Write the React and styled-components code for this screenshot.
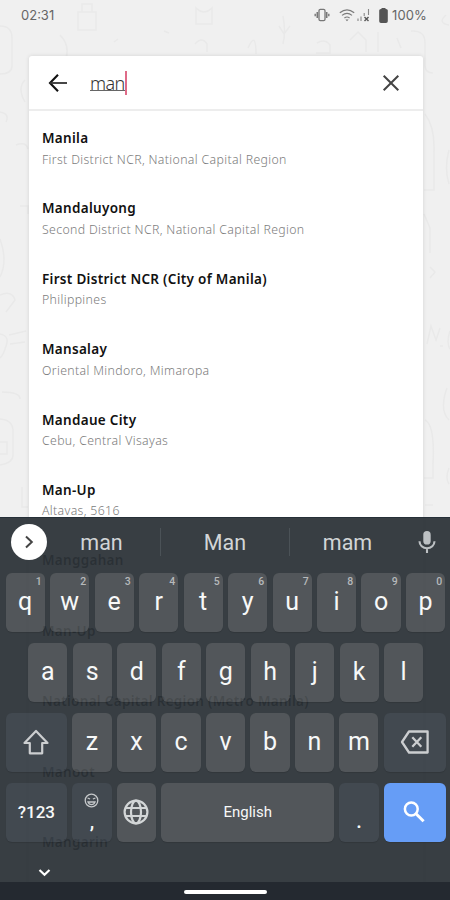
import React from 'react';
import styled, { createGlobalStyle } from 'styled-components';

const Global = createGlobalStyle`
  * { box-sizing: border-box; }
  body { margin: 0; background: #f0f0f0; }
  svg { display: block; flex: none; }
`;

const Screen = styled.div`
  position: relative;
  width: 450px;
  height: 900px;
  overflow: hidden;
  background: #f0f0f0;
  font-family: 'Noto Sans', sans-serif;
`;

const Doodles = styled.svg`
  position: absolute;
  inset: 0;
  fill: none;
  stroke: #e9e9e9;
  stroke-width: 1.5;
`;

const StatusBar = styled.header`
  position: relative;
  display: flex;
  align-items: center;
  height: 30px;
  padding: 0 20px 0 21px;
  color: #666;
  font: 400 13px/30px Inter, sans-serif;
`;

const Time = styled.span`
  flex: 1;
  letter-spacing: 0;
`;

const StatusIcons = styled.div`
  display: flex;
  align-items: center;
  margin-right: 4px;
`;

const Percent = styled.span`
  width: 38px;
  letter-spacing: 0.1px;
`;

const Spacer = styled.span`
  width: ${(p) => p.$width}px;
`;

const Card = styled.main`
  position: relative;
  width: 394px;
  height: 870px;
  margin: 26px 0 0 29px;
  background: #fff;
  border-radius: 3px 3px 0 0;
  box-shadow: 0 0 4px rgba(0, 0, 0, 0.12);
`;

const SearchBar = styled.div`
  display: flex;
  align-items: center;
  height: 55px;
  padding: 0 22px 0 19px;
  border-bottom: 2px solid #ededed;
`;

const Query = styled.div`
  display: flex;
  align-items: center;
  flex: 1;
  margin-left: 22px;
  color: #333;
  font: 300 18px/24px 'Noto Sans', sans-serif;
`;

const Typed = styled.span`
  height: 17px;
  line-height: 18px;
  letter-spacing: -0.6px;
  border-bottom: 1px solid #666;
`;

const Caret = styled.span`
  width: 2.5px;
  height: 24px;
  background: #df6b88;
`;

const Places = styled.ul`
  margin: 0;
  padding: 17px 0 0 13px;
  list-style: none;
`;

const Place = styled.li`
  height: 70.4px;
`;

const PlaceName = styled.div`
  color: #111;
  font-size: 13.5px;
  font-weight: 600;
  line-height: 20.5px;
  letter-spacing: 0.3px;
  white-space: nowrap;
`;

const PlaceArea = styled.div`
  color: #7c7c7c;
  font-size: 12.3px;
  font-weight: 300;
  line-height: 21px;
  letter-spacing: 0.35px;
  white-space: nowrap;
`;

const Keyboard = styled.section`
  position: absolute;
  left: 0;
  right: 0;
  bottom: 0;
  height: 383px;
  display: flex;
  flex-direction: column;
  background: rgba(44, 51, 56, 0.945);
  border-top: 1px solid #263038;
  font-family: Roboto, sans-serif;
`;

const Suggestions = styled.div`
  display: flex;
  align-items: center;
  height: 50px;
  padding-left: 11px;
  margin: -1px 0 7px;
`;

const Expand = styled.button`
  display: grid;
  place-items: center;
  width: 36px;
  height: 36px;
  padding: 0;
  border: 0;
  border-radius: 50%;
  background: #fff;
  margin-right: -4px;
`;

const Suggestion = styled.span`
  width: ${(p) => p.$width}px;
  color: #d2d5d7;
  font-size: 21.5px;
  line-height: 26px;
  text-align: center;
  padding-top: 3px;
`;

const Divider = styled.span`
  width: 1px;
  height: 28px;
  background: #4b5257;
`;

const Rows = styled.div`
  display: flex;
  flex-direction: column;
  gap: 11.7px;
  padding-left: 5.6px;
`;

const Row = styled.div`
  display: flex;
  gap: 5.3px;
  height: 58.3px;
  padding-left: ${(p) => p.$indent || 0}px;
`;

const keyColors = {
  letter: 'rgba(255,250,240,0.135)',
  action: 'rgba(120,130,150,0.17)',
  primary: '#669df6',
};

const Key = styled.button`
  position: relative;
  display: flex;
  flex-direction: column;
  align-items: center;
  justify-content: center;
  flex: none;
  width: ${(p) => p.$width || 39.2}px;
  height: 58.3px;
  padding: 0;
  border: 0;
  border-radius: 6px;
  background: ${(p) => keyColors[p.$kind || 'letter']};
  box-shadow: 0 1px 1px rgba(0, 0, 0, 0.12);
  color: #f7f8f8;
  font: ${(p) => p.$weight || 400} ${(p) => p.$size || 25}px/30px Roboto, sans-serif;
`;

const Hint = styled.span`
  position: absolute;
  top: 3px;
  right: 3px;
  color: #b6b9bb;
  font-size: 10.5px;
  font-weight: 500;
  line-height: 12px;
`;

const Mark = styled.span`
  height: 22px;
  font-size: 20px;
  font-weight: 500;
  line-height: 22px;
  margin-top: ${(p) => p.$top || 0}px;
`;

const Footer = styled.div`
  display: flex;
  align-items: center;
  height: 41px;
  margin-top: auto;
  padding: 21px 0 0 38px;
`;

const NavBar = styled.div`
  display: flex;
  align-items: center;
  justify-content: center;
  height: 18px;
  background: #242930;
`;

const Pill = styled.span`
  width: 83px;
  height: 4px;
  margin-top: 2px;
  border-radius: 2px;
  background: #fff;
`;

const places = [
  ['Manila', 'First District NCR, National Capital Region'],
  ['Mandaluyong', 'Second District NCR, National Capital Region'],
  ['First District NCR (City of Manila)', 'Philippines'],
  ['Mansalay', 'Oriental Mindoro, Mimaropa'],
  ['Mandaue City', 'Cebu, Central Visayas'],
  ['Man-Up', 'Altavas, 5616'],
  ['Manggahan', ''],
  ['Man-Up', ''],
  ['National Capital Region (Metro Manila)', ''],
  ['Manoot', ''],
  ['Mangarin', ''],
];

const Background = () => (
  <Doodles width="450" height="900">
    <path d="M78 12h18v18H78zM82 12V4h10v8M60 35q10 10 6 24M0 26q12 0 12 12v28q0 8-12 8M114 42l4-3M164 31l5 2M196 8q8 8 16 0v16h-16zM195 44q7-8 12 0v8" />
    <path d="M248 48q8-18 8 6M283 16q3 16 0 28M279 26l5 8 6-8M317 43q8-5 13 2v8h-14M350 40l8-8 8 8v12M378 32v20M397 38l4 10M411 31q14-1 14 12v22q0 8 8 8M446 15q-9 8 3 10" />
    <path d="M25 80q-8 8 0 22M0 112q10 2 6 10M16 145q10-4 12 4M20 206h8v8M0 239q8 22 0 38M0 295q12-5 15 5l-9 12M0 334q10 2 6 12-3 10-6 12M9 335l17-4M10 344l15-2M2 392q18 0 18 7M0 419q13 1 13 12v24q0 8-13 10M0 442h7v12H0M22 487v20h6" />
    <path d="M425 114q10 13 9 38v38h-10M449 150q-5 18 0 34M424 214l6 14v25M430 267l5 5-5 6M427 344l4-18 5 14 4-12M440 346h3M450 331q-4 12 0 18M447 388q-8 22 2 32M425 420q10 5 8 44v14h-9M425 505h8M449 468q-4 10 0 16" />
  </Doodles>
);

const VibrateIcon = () => (
  <svg width="16" height="14" viewBox="0 0 16 14" fill="none" stroke="#777">
    <rect x="5" y="1.4" width="6" height="11.2" rx="1.4" strokeWidth="1.3" />
    <path d="M3.3 4v6M12.7 4v6" strokeWidth="1.6" />
    <path d="M1.2 5.7v2.6M14.8 5.7v2.6" strokeWidth="1.4" />
  </svg>
);

const WifiIcon = () => (
  <svg width="16" height="13" viewBox="0 0 16 13" fill="none" stroke="#7c7c7c" strokeWidth="1.2">
    <path d="M.8 3.8Q8-2 15.2 3.8M3 6.4q5-4 10 0M5.4 9q2.6-2 5.2 0" />
    <path d="M6.4 10.5h3.2L8 12.3z" fill="#777" stroke="none" />
  </svg>
);

const SignalIcon = () => (
  <svg width="13" height="14" viewBox="0 0 13 14" fill="none" stroke="#888" strokeWidth="1.1">
    <path d="M1 10.5V13M4 8.5V13M7.2 5v3M11.5 1v6" />
    <path d="M7.5 9l4 4M11.5 9l-4 4" stroke="#555" strokeWidth="1.4" />
  </svg>
);

const BatteryIcon = () => (
  <svg width="9" height="15" viewBox="0 0 9 15">
    <path d="M2.5 1V0h4v1H7A1.8 1.8 0 0 1 8.8 3v10.2A1.8 1.8 0 0 1 7 15H2a1.8 1.8 0 0 1-1.8-1.8V3A1.8 1.8 0 0 1 2 1z" fill="#555" />
  </svg>
);

const BackIcon = () => (
  <svg width="20" height="20" viewBox="0 0 20 20" fill="none" stroke="#111" strokeWidth="2.1">
    <path d="M10 1.8L2 10l8 8.2" />
    <path d="M2 10h17" stroke="#333" strokeWidth="1.8" />
  </svg>
);

const ClearIcon = () => (
  <svg width="20" height="20" viewBox="0 0 20 20" fill="none" stroke="#444" strokeWidth="2">
    <path d="M2.7 2.7l14.6 14.6M17.3 2.7L2.7 17.3" />
  </svg>
);

const MicIcon = () => (
  <svg width="18" height="24" viewBox="0 0 18 24" fill="none" stroke="#bcc0c3" strokeWidth="2.1">
    <rect x="5.3" y="1" width="7.4" height="13.6" rx="3.7" fill="#bcc0c3" stroke="none" />
    <path d="M1.5 11.2a7.5 7.1 0 0 0 15 0M9 18.3V23" />
  </svg>
);

const ShiftIcon = () => (
  <svg width="28" height="26" viewBox="0 0 28 26" fill="none" stroke="#ccced0" strokeWidth="2.2" strokeLinejoin="round">
    <path d="M14 2L2.5 14h5.3v10.3h12.4V14h5.3z" />
  </svg>
);

const BackspaceIcon = () => (
  <svg width="30" height="24" viewBox="0 0 30 24" fill="none" stroke="#ccced0" strokeWidth="2.3" strokeLinejoin="round">
    <path d="M9 1.5h18.6v21H9L2 12z" />
    <path d="M12.3 7.3l9 9.4M21.3 7.3l-9 9.4" />
  </svg>
);

const FaceIcon = () => (
  <svg width="15" height="15" viewBox="0 0 15 15" fill="none" stroke="#c5c8ca" strokeWidth="1.3">
    <circle cx="7.5" cy="7.5" r="6.3" />
    <path d="M3.6 5l2.5 1M11.4 5L8.9 6M4 9h7q-1 2.6-3.5 2.6T4 9z" />
  </svg>
);

const GlobeIcon = () => (
  <svg width="26" height="26" viewBox="0 0 26 26" fill="none" stroke="#d3d6d7" strokeWidth="2.2">
    <circle cx="13" cy="13" r="11.4" />
    <ellipse cx="13" cy="13" rx="5" ry="11.4" />
    <path d="M2.7 9h20.6M2.7 17h20.6" />
  </svg>
);

const SearchIcon = () => (
  <svg width="24" height="22" viewBox="0 0 24 22" fill="none" stroke="#fff" strokeWidth="2.5">
    <circle cx="8.3" cy="8" r="6.4" />
    <path d="M13 12.7l7.6 7.6" strokeWidth="3" />
  </svg>
);

export default function App() {
  return (
    <Screen>
      <Global />
      <Background />
      <StatusBar>
        <Time>02:31</Time>
        <StatusIcons>
          <VibrateIcon />
          <Spacer $width={9} />
          <WifiIcon />
          <Spacer $width={2} />
          <SignalIcon />
          <Spacer $width={9} />
          <BatteryIcon />
        </StatusIcons>
        <Percent>100%</Percent>
      </StatusBar>
      <Card>
        <SearchBar>
          <BackIcon />
          <Query>
            <Typed>man</Typed>
            <Caret />
          </Query>
          <ClearIcon />
        </SearchBar>
        <Places>
          {places.map(([name, area], i) => (
            <Place key={i}>
              <PlaceName>{name}</PlaceName>
              <PlaceArea>{area}</PlaceArea>
            </Place>
          ))}
        </Places>
      </Card>
      <Keyboard>
        <Suggestions>
          <Expand aria-label="Expand">
            <svg width="12" height="14" viewBox="0 0 12 14" fill="none" stroke="#444" strokeWidth="2">
              <path d="M3 1.5L8.8 7 3 12.5" />
            </svg>
          </Expand>
          <Suggestion $width={117}>man</Suggestion>
          <Divider />
          <Suggestion $width={128}>Man</Suggestion>
          <Divider />
          <Suggestion $width={115}>mam</Suggestion>
          <Spacer $width={13} />
          <MicIcon />
        </Suggestions>
        <Rows>
          <Row>
            {[...'qwertyuiop'].map((c, i) => (
              <Key key={c}>
                <Hint>{(i + 1) % 10}</Hint>
                {c}
              </Key>
            ))}
          </Row>
          <Row $indent={22.6}>
            {[...'asdfghjkl'].map((c) => (
              <Key key={c}>{c}</Key>
            ))}
          </Row>
          <Row>
            <Key $kind="action" $width={61.5} aria-label="Shift"><ShiftIcon /></Key>
            {[...'zxcvbnm'].map((c) => (
              <Key key={c}>{c}</Key>
            ))}
            <Key $kind="action" $width={61.8} aria-label="Backspace"><BackspaceIcon /></Key>
          </Row>
          <Row>
            <Key $kind="action" $width={61.5} $size={17} $weight={500}>?123</Key>
            <Key $kind="action">
              <FaceIcon />
              <Mark $top={2}>,</Mark>
            </Key>
            <Key aria-label="Language"><GlobeIcon /></Key>
            <Key $width={172.8} $size={15}>English</Key>
            <Key $kind="action"><Mark $top={18}>.</Mark></Key>
            <Key $kind="primary" $width={61.8} aria-label="Search"><SearchIcon /></Key>
          </Row>
        </Rows>
        <Footer>
          <svg width="13" height="9" viewBox="0 0 13 9" fill="none" stroke="#fff" strokeWidth="2.2">
            <path d="M1.5 2l5 4.8 5-4.8" />
          </svg>
        </Footer>
        <NavBar><Pill /></NavBar>
      </Keyboard>
    </Screen>
  );
}
